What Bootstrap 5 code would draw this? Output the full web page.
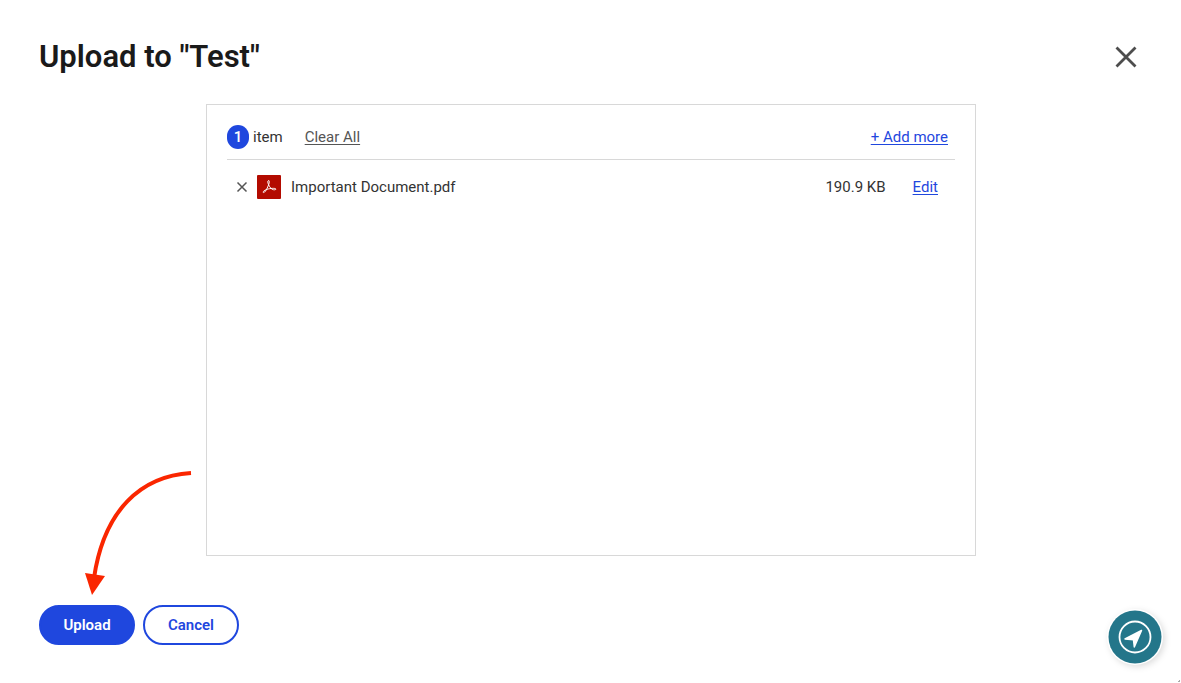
<!DOCTYPE html>
<html lang="en">
<head>
<meta charset="utf-8">
<meta name="viewport" content="width=device-width, initial-scale=1">
<title>Upload to "Test"</title>
<link href="https://cdn.jsdelivr.net/npm/bootstrap@5.3.0/dist/css/bootstrap.min.css" rel="stylesheet">
<script src="https://cdn.jsdelivr.net/npm/bootstrap@5.3.0/dist/js/bootstrap.bundle.min.js" defer></script>
<style>
  body { font-family: Roboto, "Liberation Sans", sans-serif; font-size: 15px; line-height: 20px; color: #333; }
  .upload-page { padding: 36px 38px 38px 39px; }
  .page-header { margin-bottom: 26px; padding-right: 5px; }
  .page-title { font-size: 31px; line-height: 42px; font-weight: 600; color: #1a1a1a; }
  .upload-panel { max-width: 770px; border: 1px solid #d8d8d8; }
  .panel-head { border-bottom: 1px solid #d8d8d8; padding: 0 7px 10px 0; }
  .panel-head .muted { margin-left: 22px; }
  .file-row { padding: 15px 17px 0 8px; }
  .file-name { margin-left: 10px; }
  .edit-link { margin-left: 27px; }
  .count-pill { width: 22px; height: 24px; border-radius: 11px; background: #1f47de; color: #fff; font-weight: 500; }
  .btn-text { padding: 0; border: 0; font-size: 15px; line-height: 20px; color: #1f47de; text-underline-offset: 2px; }
  .btn-text.muted { color: #555; }
  .btn-icon { padding: 0; border: 0; line-height: 0; color: #555; }
  .btn-pill { width: 96px; height: 40px; padding: 0; border: 2px solid #1f47de; font-size: 15px; font-weight: 600; color: #1f47de; }
  .btn-pill.filled { background: #1f47de; color: #fff; }
  .page-footer { margin-top: 49px; }
  .hint-arrow { left: 44px; bottom: 49px; pointer-events: none; }
  .help-fab { right: 17px; bottom: 17px; width: 58px; height: 58px; padding: 0; border: 0; line-height: 0; filter: drop-shadow(2px 2px 3px #0002); }
  .corner-grip { right: 0; bottom: 0; line-height: 0; }
</style>
</head>
<body>
<main class="upload-page min-vh-100 d-flex flex-column">
  <header class="page-header d-flex justify-content-between align-items-center">
    <h1 class="page-title mb-0">Upload to "Test"</h1>
    <button class="btn btn-icon" type="button" aria-label="Close">
      <svg width="24" height="24" viewBox="0 0 24 24" fill="none" stroke="#4d4d4d" stroke-width="2.8"><path d="M2.500 2.500 21.500 21.500M21.500 2.500 2.500 21.500"/></svg>
    </button>
  </header>

  <section class="upload-panel w-100 mx-auto flex-grow-1 p-3" aria-label="Selected files">
    <div class="p-1">
      <div class="panel-head d-flex align-items-center">
        <span class="count-pill d-flex align-items-center justify-content-center">1</span>
        <span class="ms-1">item</span>
        <button class="btn btn-text muted text-decoration-underline" type="button">Clear All</button>
        <button class="btn btn-text text-decoration-underline ms-auto" type="button">+ Add more</button>
      </div>
      <ul class="list-unstyled mb-0">
        <li class="file-row d-flex align-items-center">
          <button class="btn btn-icon" type="button" aria-label="Remove file">
            <svg width="14" height="14" viewBox="0 0 14 14" fill="none" stroke="#555" stroke-width="1.500"><path d="m2.500 2.500 9 9m0-9-9 9"/></svg>
          </button>
          <svg class="ms-2" width="24" height="24" viewBox="0 0 24 24" aria-hidden="true"><rect width="24" height="24" rx="1" fill="#b30b00"/><path d="M11.500 5.500c-1 .3-.8 2.300.1 4.300.9 2 2.500 4.300 4.800 4.900 1.300.3 2.800-.1 2.500-.7-.5-1.100-5.800-.7-8.800.3-2.300.8-4.200 1.900-3.900 3 .3.900 1.800-.2 3-2.300 1.300-2.300 2.800-5.700 3.100-7.700.1-1-.1-2-.8-1.800Z" fill="none" stroke="#fff" stroke-width="1"/></svg>
          <span class="file-name">Important Document.pdf</span>
          <span class="ms-auto">190.9 KB</span>
          <button class="btn btn-text text-decoration-underline edit-link" type="button">Edit</button>
        </li>
      </ul>
    </div>
  </section>

  <footer class="page-footer position-relative d-flex gap-2">
    <svg class="hint-arrow position-absolute" width="112" height="128" viewBox="0 0 112 128" aria-hidden="true"><path d="M108 5C58 8 21 42 11 110" fill="none" stroke="#fa2600" stroke-width="4"/><path d="m2 105 20 3-13 19Z" fill="#fa2600"/></svg>
    <button class="btn btn-pill filled rounded-pill" type="submit">Upload</button>
    <button class="btn btn-pill rounded-pill" type="button">Cancel</button>
  </footer>
</main>

<button class="btn help-fab rounded-circle position-fixed" type="button" aria-label="Open guide">
  <svg width="58" height="58" viewBox="0 0 58 58"><circle cx="29" cy="29" r="28" fill="#fff"/><circle cx="29" cy="29" r="26.500" fill="#24768a"/><circle cx="29" cy="29" r="15.500" fill="none" stroke="#fff" stroke-width="1.800"/><path d="m35.500 22.500-16.500 8.500 8.500.8.800 7.200Z" fill="#fff" stroke="#fff" stroke-width="1.500" stroke-linejoin="round"/></svg>
</button>
<svg class="corner-grip position-fixed" width="4" height="4" viewBox="0 0 4 4" aria-hidden="true"><path d="M2 1h1v1H2zM1 2h2v1H1z" fill="#aaa"/></svg>
</body>
</html>
